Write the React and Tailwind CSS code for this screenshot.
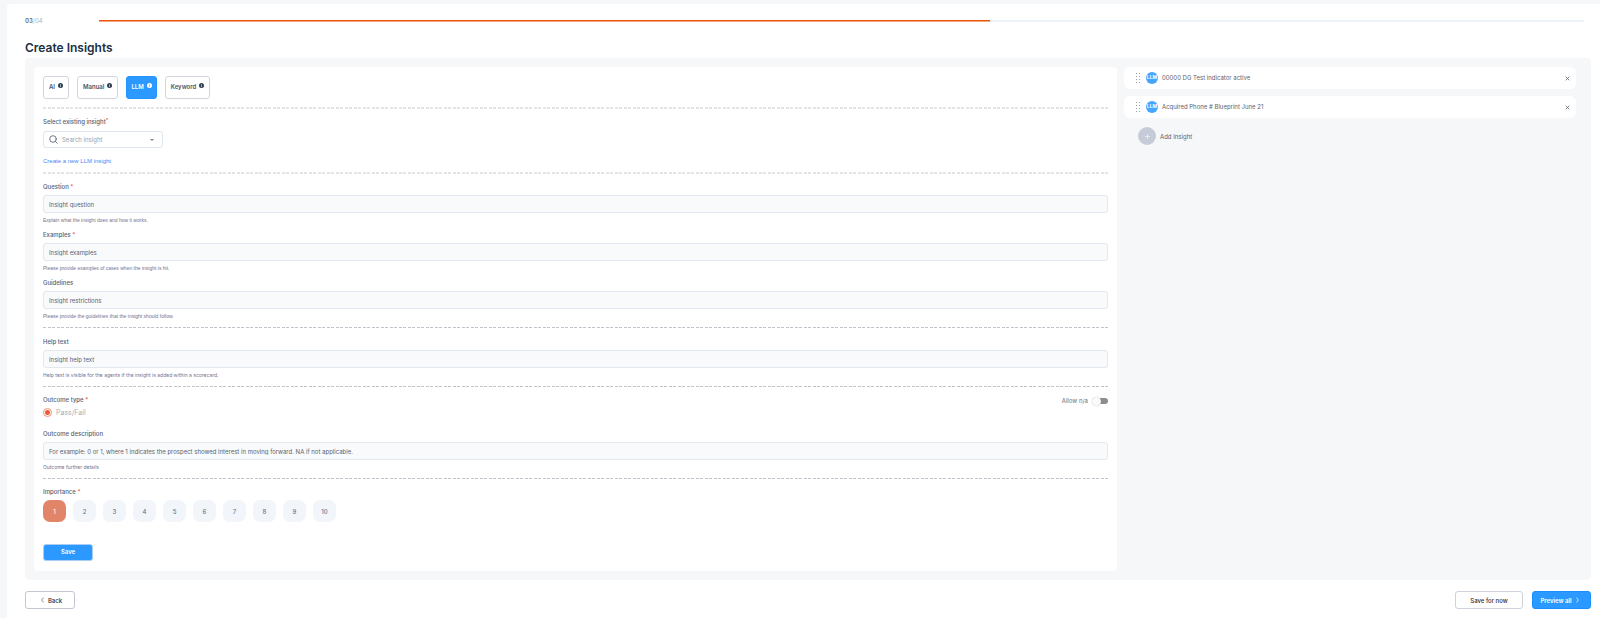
import { useState } from "react";

function InfoIcon({ dotClass }) {
  return (
    <svg viewBox="0 0 10 10" className="h-[5px] w-[5px] shrink-0" aria-hidden="true">
      <circle cx="5" cy="5" r="5" fill="currentColor" />
      <path d="M5 4.4v3.2M5 2.2v1.1" className={dotClass} strokeWidth="1.4" fill="none" />
    </svg>
  );
}

function ThickDivider() {
  return (
    <div className="h-[2px] bg-[repeating-linear-gradient(90deg,#e3e4e7_0_3px,transparent_3px_5px,#e3e4e7_5px_8px,transparent_8px_9px)]" />
  );
}

function ThinDivider() {
  return (
    <div className="mt-[7px] h-px bg-[repeating-linear-gradient(90deg,#c2c3cd_0_3px,transparent_3px_5px,#c2c3cd_5px_8px,transparent_8px_9px)]" />
  );
}

function Required() {
  return <span className="text-[#f04438]"> *</span>;
}

function Field({ id, label, required, placeholder, help, compact }) {
  return (
    <div className="flex flex-col">
      <label htmlFor={id} className="pt-px text-[6px] leading-[10px] font-medium text-[#566070]">
        {label}
        {required && <Required />}
      </label>
      <input
        id={id}
        type="text"
        placeholder={placeholder}
        className="mt-[3px] h-[18px] w-full rounded-[3px] border border-[#e2e8f0] bg-[#f8fafc] px-[5px] text-[6px] text-[#5b6270] placeholder:text-[#5b6270] placeholder:opacity-100"
      />
      <p
        className={
          "mt-[3px] text-[5px] leading-[8px] text-[#75728d] " +
          (compact ? "font-['Liberation_Sans',sans-serif]" : "")
        }
      >
        {help}
      </p>
    </div>
  );
}

const tabs = ["AI", "Manual", "LLM", "Keyword"];

function Tabs() {
  const [active, setActive] = useState("LLM");
  return (
    <div className="flex gap-2">
      {tabs.map((name) => (
        <button
          key={name}
          type="button"
          onClick={() => setActive(name)}
          className={
            "flex h-[23px] items-start gap-[3px] rounded-[3px] border pt-[5px] text-[6px] leading-[10px] font-semibold " +
            (active === name
              ? "border-[#2196ff] bg-[#2b99ff] px-[4px] text-white"
              : "border-[#d3d5de] bg-white px-[5px] text-[#4a5563]")
          }
        >
          {name}
          <span className={active === name ? "pt-px text-white" : "pt-px text-[#2f3f52]"}>
            <InfoIcon dotClass={active === name ? "stroke-[#2b99ff]" : "stroke-white"} />
          </span>
        </button>
      ))}
    </div>
  );
}

function Importance() {
  const [value, setValue] = useState(1);
  return (
    <div className="mt-[3px] flex gap-[7px]">
      {[1, 2, 3, 4, 5, 6, 7, 8, 9, 10].map((n) => (
        <button
          key={n}
          type="button"
          onClick={() => setValue(n)}
          className={
            "h-[22px] w-[23px] rounded-[7px] text-[6px] font-medium " +
            (value === n ? "bg-[#e28468] text-white" : "bg-[#f2f5f9] text-[#64748b]")
          }
        >
          {n}
        </button>
      ))}
    </div>
  );
}

function InsightItem({ title }) {
  return (
    <li className="flex h-[22px] items-center rounded-[6px] bg-white pr-[6px] pl-3">
      <svg viewBox="0 0 4 10" className="h-[10px] w-[4px] text-[#9aa2af]" fill="currentColor" aria-hidden="true">
        <path d="M0 0h1v1H0zM3 0h1v1H3zM0 3h1v1H0zM3 3h1v1H3zM0 6h1v1H0zM3 6h1v1H3zM0 9h1v1H0zM3 9h1v1H3z" />
      </svg>
      <span className="ml-[6px] flex h-3 w-3 items-center justify-center rounded-full bg-[#45a5ff] text-[5px] font-bold text-white">
        LLM
      </span>
      <span className="ml-1 flex-1 text-[6px] leading-[10px] text-[#5b6270]">{title}</span>
      <button type="button" aria-label={"Remove " + title} className="text-[#5b6675]">
        <svg viewBox="0 0 5 5" className="h-[5px] w-[5px]" fill="none" stroke="currentColor" strokeWidth="0.8">
          <path d="M.7.7l3.6 3.6M4.3.7L.7 4.3" />
        </svg>
      </button>
    </li>
  );
}

export default function App() {
  return (
    <div className="flex min-h-screen bg-[#f6f7f9] pt-1 pl-[7px] font-['Inter','Liberation_Sans',sans-serif]">
      <main className="flex flex-1 flex-col rounded-tl-[4px] bg-white pr-[9px] pb-[9px] pl-[18px]">
        <div className="mt-3 flex items-center pr-[7px]">
          <div className="w-[74px] text-[6px] leading-[10px] text-[#a9b4be]">
            <b className="font-semibold text-[#5d7285]">03</b>/04
          </div>
          <div
            role="progressbar"
            aria-label="Step 3 of 4"
            aria-valuenow={60}
            className="h-[2px] flex-1 bg-[#edf2f9]"
          >
            <div className="h-full w-3/5 border-b border-[#f6a47a] bg-[#e9550c]" />
          </div>
        </div>

        <h1 className="mt-[14px] text-[12px] leading-4 font-semibold text-[#1b2f45]">Create Insights</h1>

        <div className="mt-[2px] grid grid-cols-[minmax(0,1083fr)_minmax(0,452fr)] gap-[7px] rounded-[4px] bg-[#f6f7f9] py-[9px] pr-[15px] pl-[9px]">
          <form
            className="rounded-[4px] bg-white px-[9px] pt-[9px] pb-[10px]"
            onSubmit={(e) => e.preventDefault()}
          >
            <Tabs />
            <div className="mt-2">
              <ThickDivider />
            </div>

            <div className="mt-2 mb-[6px] flex flex-col items-start">
              <label htmlFor="existing" className="text-[6px] leading-[10px] font-medium text-[#566070]">
                Select existing insight<span className="align-top text-[5px] leading-[6px] text-[#f04438]">*</span>
              </label>
              <div className="relative mt-1">
                <select
                  id="existing"
                  defaultValue=""
                  className="block h-[17px] w-[120px] appearance-none rounded-[3px] border border-[#dfe5ee] bg-white pr-4 pl-[18px] text-[6px] text-[#9aa0aa]"
                >
                  <option value="">Search insight</option>
                </select>
                <svg
                  viewBox="0 0 9 9"
                  className="pointer-events-none absolute top-1 left-[6px] h-[9px] w-[9px] text-[#5f6b7a]"
                  fill="none"
                  stroke="currentColor"
                  strokeWidth="0.9"
                  strokeLinecap="round"
                  aria-hidden="true"
                >
                  <circle cx="4" cy="4" r="3.3" />
                  <path d="M6.4 6.4L8.3 8.3" />
                </svg>
                <svg
                  viewBox="0 0 4 2"
                  className="pointer-events-none absolute top-2 right-[9px] h-[2px] w-[4px] text-[#7c8490]"
                  fill="currentColor"
                  aria-hidden="true"
                >
                  <path d="M0 0h4L2 2z" />
                </svg>
              </div>
              <a
                href="#new"
                className="mt-2 font-['Liberation_Sans',sans-serif] text-[6px] leading-[10px] text-[#4a86f7]"
              >
                Create a new LLM insight
              </a>
            </div>
            <ThickDivider />

            <div className="mt-[7px] flex flex-col gap-[5px]">
              <Field id="question" label="Question" required compact placeholder="Insight question" help="Explain what the insight does and how it works." />
              <Field id="examples" label="Examples" required compact placeholder="Insight examples" help="Please provide examples of cases when the insight is hit." />
              <Field id="guidelines" label="Guidelines" compact placeholder="Insight restrictions" help="Please provide the guidelines that the insight should follow." />
            </div>
            <ThinDivider />

            <div className="mt-2">
              <Field
                id="help-text"
                label="Help text"
                placeholder="Insight help text"
                help="Help text is visible for the agents if the insight is added within a scorecard."
              />
            </div>
            <ThinDivider />

            <div className="mt-2 flex items-start justify-between">
              <fieldset>
                <legend className="text-[6px] leading-[10px] font-medium text-[#566070]">
                  Outcome type
                  <Required />
                </legend>
                <label className="mt-[3px] flex items-center gap-1 text-[7px] leading-[9px] text-[#a7adb6]">
                  <input
                    type="radio"
                    name="outcome"
                    defaultChecked
                    className="h-[9px] w-[9px] appearance-none rounded-full border border-[#ef8f72] bg-[radial-gradient(circle,#ea5a33_0_2px,#ffffff_3px)]"
                  />
                  Pass/Fail
                </label>
              </fieldset>
              <label className="mt-px flex items-center gap-1 text-[6px] leading-[10px] text-[#6b7280]">
                Allow n/a
                <span className="relative flex h-[9px] w-4 items-center justify-end">
                  <input type="checkbox" role="switch" className="peer h-[6px] w-[14px] appearance-none rounded-full bg-[#8e8e8e]" />
                  <span className="pointer-events-none absolute top-0 left-0 h-[9px] w-[9px] rounded-full bg-[#fafafa] shadow-[0_0_1px_#00000055] peer-checked:left-[7px]" />
                </span>
              </label>
            </div>

            <div className="mt-[11px]">
              <Field
                id="outcome-description"
                label="Outcome description"
                placeholder="For example: 0 or 1, where 1 indicates the prospect showed interest in moving forward. NA if not applicable."
                help="Outcome further details"
              />
            </div>
            <ThinDivider />

            <div className="mt-2 text-[6px] leading-[10px] font-medium text-[#566070]">
              Importance
              <Required />
            </div>
            <Importance />

            <button
              type="submit"
              className="mt-[22px] block h-[17px] w-[50px] rounded-[3px] border border-[#a9cdf5] bg-[#2b99ff] pb-[2px] text-[6px] font-semibold text-white"
            >
              Save
            </button>
          </form>

          <aside>
            <ul className="flex flex-col gap-[7px]">
              <InsightItem title="00000 DG Test indicator active" />
              <InsightItem title="Acquired Phone # Blueprint June 21" />
            </ul>
            <button type="button" className="mt-[9px] ml-[14px] flex items-center gap-1 text-[6px] text-[#5b6270]">
              <span className="flex h-[18px] w-[18px] items-center justify-center rounded-full bg-[#c5ccd8]">
                <svg viewBox="0 0 5 5" className="h-[5px] w-[5px]" stroke="#eef1f5" strokeWidth="0.8" aria-hidden="true">
                  <path d="M2.5 0v5M0 2.5h5" />
                </svg>
              </span>
              Add Insight
            </button>
          </aside>
        </div>

        <footer className="mt-[11px] flex items-center gap-[9px] text-[6px] font-medium">
          <button
            type="button"
            className="mr-auto flex h-[18px] w-[50px] items-center justify-center gap-1 rounded-[3px] border border-[#c3c6d4] bg-white pl-[3px] text-[#1f2937]"
          >
            <svg viewBox="0 0 3 6" className="h-[6px] w-[3px]" fill="none" stroke="#6b7280" strokeWidth="0.8" aria-hidden="true">
              <path d="M2.6.5L.6 3l2 2.5" />
            </svg>
            Back
          </button>
          <button type="button" className="h-[18px] w-[68px] rounded-[3px] border border-[#cfd2dc] bg-white text-[#1f2937]">
            Save for now
          </button>
          <button
            type="button"
            className="flex h-[18px] w-[59px] items-center justify-center gap-1 rounded-[3px] border border-[#1a8fff] bg-[#2b99ff] pr-1 font-semibold text-white"
          >
            Preview all
            <svg viewBox="0 0 3 6" className="h-[6px] w-[3px]" fill="none" stroke="currentColor" strokeWidth="0.7" aria-hidden="true">
              <path d="M.4.5l2 2.5-2 2.5" />
            </svg>
          </button>
        </footer>
      </main>
    </div>
  );
}
